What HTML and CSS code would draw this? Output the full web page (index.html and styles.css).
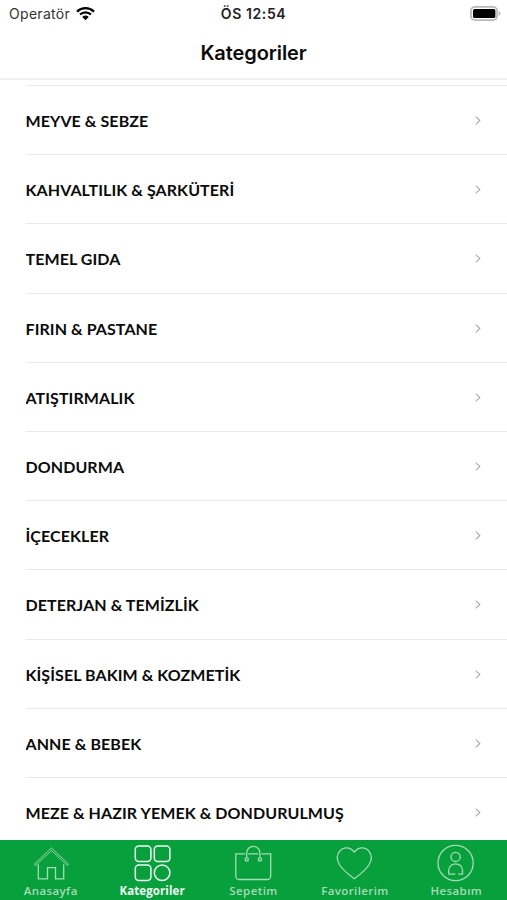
FILE: index.html
```html
<!DOCTYPE html>
<html lang="tr">

<head>
    <meta charset="UTF-8">
    <meta name="viewport" content="width=device-width, initial-scale=1">
    <title>Kategoriler</title>
    <link rel="stylesheet" href="styles.css">
</head>
<body>
    <header>
        <div class="status-bar">
            <div class="carrier">
                <span>Operatör</span>
                <svg class="wifi" viewBox="0 0 18 14" width="19" height="15">
                    <path d="M1 5.2a11.5 11.5 0 0 1 16 0M3.8 8a7.4 7.4 0 0 1 10.4 0" fill="none" stroke="#000" stroke-width="2.1"/>
                    <path d="M5.9 10.2a4.4 4.4 0 0 1 6.2 0L9 13.3z"/>
                </svg>
            </div>
            <span class="clock">ÖS 12:54</span>
            <svg class="battery" viewBox="0 0 31 15" width="31" height="15">
                <rect x=".9" y=".9" width="26.2" height="13.2" rx="4" fill="#fff" stroke="#b9b9b9" stroke-width="1.8"/>
                <rect x="3" y="3" width="22.4" height="9" rx="1.6"/>
                <path d="M28.7 5c2.4 .8 2.4 4.2 0 5z" fill="#b9b9b9"/>
            </svg>
        </div>
        <h1>Kategoriler</h1>
    </header>

    <ul class="categories">
        <li><span>MEYVE &amp; SEBZE</span><svg class="arrow" viewBox="0 0 6 9"><path d="M.8.7 4.8 4.5.8 8.3"/></svg></li>
        <li><span>KAHVALTILIK &amp; ŞARKÜTERİ</span><svg class="arrow" viewBox="0 0 6 9"><path d="M.8.7 4.8 4.5.8 8.3"/></svg></li>
        <li><span>TEMEL GIDA</span><svg class="arrow" viewBox="0 0 6 9"><path d="M.8.7 4.8 4.5.8 8.3"/></svg></li>
        <li><span>FIRIN &amp; PASTANE</span><svg class="arrow" viewBox="0 0 6 9"><path d="M.8.7 4.8 4.5.8 8.3"/></svg></li>
        <li><span>ATIŞTIRMALIK</span><svg class="arrow" viewBox="0 0 6 9"><path d="M.8.7 4.8 4.5.8 8.3"/></svg></li>
        <li><span>DONDURMA</span><svg class="arrow" viewBox="0 0 6 9"><path d="M.8.7 4.8 4.5.8 8.3"/></svg></li>
        <li><span>İÇECEKLER</span><svg class="arrow" viewBox="0 0 6 9"><path d="M.8.7 4.8 4.5.8 8.3"/></svg></li>
        <li><span>DETERJAN &amp; TEMİZLİK</span><svg class="arrow" viewBox="0 0 6 9"><path d="M.8.7 4.8 4.5.8 8.3"/></svg></li>
        <li><span>KİŞİSEL BAKIM &amp; KOZMETİK</span><svg class="arrow" viewBox="0 0 6 9"><path d="M.8.7 4.8 4.5.8 8.3"/></svg></li>
        <li><span>ANNE &amp; BEBEK</span><svg class="arrow" viewBox="0 0 6 9"><path d="M.8.7 4.8 4.5.8 8.3"/></svg></li>
        <li><span>MEZE &amp; HAZIR YEMEK &amp; DONDURULMUŞ</span><svg class="arrow" viewBox="0 0 6 9"><path d="M.8.7 4.8 4.5.8 8.3"/></svg></li>
    </ul>

    <nav class="tab-bar">
        <a class="tab">
            <svg viewBox="0 0 38 38">
                <path d="M6.3 20.2v14.6h9.2V23.6h8v11.2h8.2V20.2"/>
                <path d="M2.2 20.2 19.4 4l17.3 16.2-1.2 1.3L19.4 6.6 3.4 21.5z" stroke-width=".9"/>
            </svg>
            <span>Anasayfa</span>
        </a>
        <a class="tab active">
            <svg viewBox="0 0 38 38">
                <rect x="2.3" y="2" width="15.6" height="15.6" rx="3.5"/>
                <rect x="21.3" y="2" width="15.6" height="15.6" rx="3.5"/>
                <rect x="2.3" y="21" width="15.6" height="15.6" rx="3.5"/>
                <circle cx="29.1" cy="28.8" r="7.8"/>
            </svg>
            <span>Kategoriler</span>
        </a>
        <a class="tab">
            <svg viewBox="0 0 38 38">
                <path d="M11.2 9.8H1.8V32a3.5 3.5 0 0 0 3.5 3.5h27.9a3.5 3.5 0 0 0 3.5-3.5V9.8h-9.4M14.2 9.8h10.1"/>
                <path d="M12.7 13.7V9a6.6 6.6 0 0 1 13.2 0v4.7"/>
                <circle cx="12.7" cy="15.4" r="1.6"/>
                <circle cx="25.9" cy="15.4" r="1.6"/>
            </svg>
            <span>Sepetim</span>
        </a>
        <a class="tab">
            <svg viewBox="0 0 38 38">
                <path d="M18.3 8C13.7 2.4 7 3 3.7 7.2.6 11.2.8 16.6 3.7 21c3.4 5.2 9 9.6 14.6 13.8 5.6-4.2 11.2-8.6 14.6-13.8 2.9-4.4 3.1-9.8 0-13.8C29.6 3 22.9 2.4 18.3 8z"/>
            </svg>
            <span>Favorilerim</span>
        </a>
        <a class="tab">
            <svg viewBox="0 0 38 38">
                <circle cx="18.6" cy="19" r="17.6"/>
                <circle cx="18.6" cy="12.9" r="4.6"/>
                <path d="M11.7 30.2v-3.6c0-9 13.8-9 13.8 0v3.6h-4.3M11.7 30.2h6.6"/>
            </svg>
            <span>Hesabım</span>
        </a>
    </nav>
</body>
</html>
```
FILE: styles.css
```css
* {
    box-sizing: border-box;
}

body {
    margin: 0;
    height: 100vh;
    display: flex;
    flex-direction: column;
    overflow: hidden;
    background-color: white;
    color: #0b0b0b;
    font-family: Inter, sans-serif;
}

header {
    flex: none;
    height: 80px;
    border-bottom: 2px solid #f0f0f0;
}

.status-bar {
    display: grid;
    grid-template-columns: 1fr auto 1fr;
    align-items: center;
    height: 27px;
    padding: 0 6px 0 9px;
    font-size: 14px;
}

.carrier {
    display: flex;
    align-items: center;
    gap: 6px;
    color: #333;
    letter-spacing: 0.3px;
}

.clock {
    margin-right: 3px;
    font-weight: 600;
    letter-spacing: 0.6px;
    color: #222;
}

.battery {
    justify-self: end;
}

h1 {
    margin: 12px 0 0;
    font-size: 20px;
    line-height: 28px;
    font-weight: 600;
    letter-spacing: -0.1px;
    text-align: center;
}

.categories {
    flex: 1;
    min-height: 0;
    margin: 5px 0 0 25.5px;
    padding: 0;
    list-style: none;
    overflow: hidden;
}

.categories li {
    display: flex;
    align-items: center;
    justify-content: space-between;
    height: 69.2px;
    padding: 1px 26px 0 0;
    border-top: 1px solid #e9e9e9;
    font-family: Lato, sans-serif;
    font-size: 16px;
    font-weight: 700;
    letter-spacing: 0.08px;
}

.arrow {
    width: 6px;
    height: 9px;
    fill: none;
    stroke: #aaa;
    stroke-width: 1.1;
}

.tab-bar {
    flex: none;
    display: grid;
    grid-template-columns: repeat(5, 1fr);
    height: 60px;
    padding-top: 4px;
    background-color: #07a03c;
}

.tab {
    display: flex;
    flex-direction: column;
    align-items: center;
    gap: 2px;
    color: #a5dbb6;
    font-family: "Open Sans", sans-serif;
    font-size: 11.5px;
    font-weight: 600;
    line-height: 14px;
    letter-spacing: 0.4px;
}

.tab svg {
    width: 38px;
    height: 38px;
    fill: none;
    stroke: currentColor;
    stroke-width: 1.3;
}

.tab.active {
    color: #effaf2;
    font-weight: 700;
    letter-spacing: 0.1px;
}

.tab.active svg {
    stroke-width: 1.5;
}
```
